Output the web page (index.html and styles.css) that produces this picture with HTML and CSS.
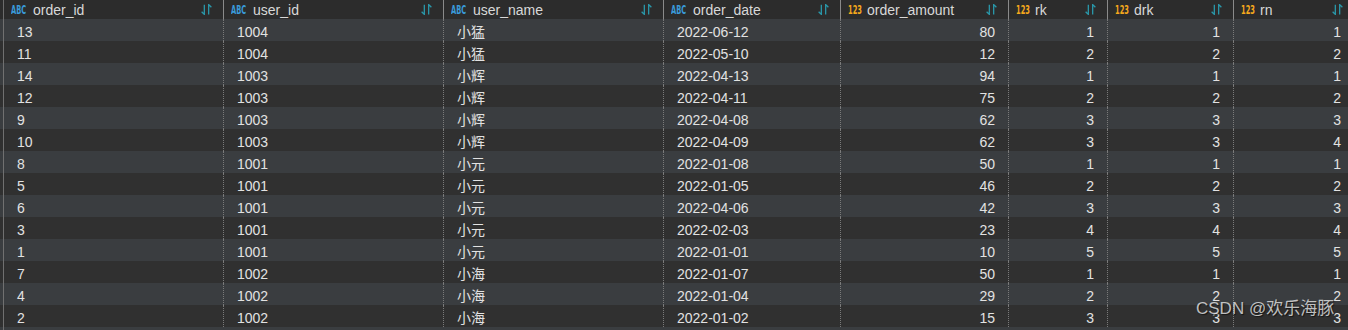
FILE: index.html
```html
<!DOCTYPE html>
<html>
<head>
<meta charset="utf-8">
<link rel="stylesheet" href="styles.css">
</head>
<body>
<div class="grid">
  <div class="row head">
    <div class="hc"><span class="badge abc">ABC</span><span class="ht">order_id</span><svg class="sort" viewBox="0 0 12 10"><path d="M4 0.5V9.5L1.5 7M8 9.5V0.5L10.5 3"/></svg></div>
    <div class="hc"><span class="badge abc">ABC</span><span class="ht">user_id</span><svg class="sort" viewBox="0 0 12 10"><path d="M4 0.5V9.5L1.5 7M8 9.5V0.5L10.5 3"/></svg></div>
    <div class="hc"><span class="badge abc">ABC</span><span class="ht">user_name</span><svg class="sort" viewBox="0 0 12 10"><path d="M4 0.5V9.5L1.5 7M8 9.5V0.5L10.5 3"/></svg></div>
    <div class="hc"><span class="badge abc">ABC</span><span class="ht">order_date</span><svg class="sort" viewBox="0 0 12 10"><path d="M4 0.5V9.5L1.5 7M8 9.5V0.5L10.5 3"/></svg></div>
    <div class="hc"><span class="badge num">123</span><span class="ht">order_amount</span><svg class="sort" viewBox="0 0 12 10"><path d="M4 0.5V9.5L1.5 7M8 9.5V0.5L10.5 3"/></svg></div>
    <div class="hc"><span class="badge num">123</span><span class="ht">rk</span><svg class="sort" viewBox="0 0 12 10"><path d="M4 0.5V9.5L1.5 7M8 9.5V0.5L10.5 3"/></svg></div>
    <div class="hc"><span class="badge num">123</span><span class="ht">drk</span><svg class="sort" viewBox="0 0 12 10"><path d="M4 0.5V9.5L1.5 7M8 9.5V0.5L10.5 3"/></svg></div>
    <div class="hc"><span class="badge num">123</span><span class="ht">rn</span><svg class="sort" viewBox="0 0 12 10"><path d="M4 0.5V9.5L1.5 7M8 9.5V0.5L10.5 3"/></svg></div>
  </div>
  <div class="row odd"><div class="c">13</div><div class="c">1004</div><div class="c">小猛</div><div class="c">2022-06-12</div><div class="c r">80</div><div class="c r">1</div><div class="c r">1</div><div class="c r">1</div></div>
  <div class="row even"><div class="c">11</div><div class="c">1004</div><div class="c">小猛</div><div class="c">2022-05-10</div><div class="c r">12</div><div class="c r">2</div><div class="c r">2</div><div class="c r">2</div></div>
  <div class="row odd"><div class="c">14</div><div class="c">1003</div><div class="c">小辉</div><div class="c">2022-04-13</div><div class="c r">94</div><div class="c r">1</div><div class="c r">1</div><div class="c r">1</div></div>
  <div class="row even"><div class="c">12</div><div class="c">1003</div><div class="c">小辉</div><div class="c">2022-04-11</div><div class="c r">75</div><div class="c r">2</div><div class="c r">2</div><div class="c r">2</div></div>
  <div class="row odd"><div class="c">9</div><div class="c">1003</div><div class="c">小辉</div><div class="c">2022-04-08</div><div class="c r">62</div><div class="c r">3</div><div class="c r">3</div><div class="c r">3</div></div>
  <div class="row even"><div class="c">10</div><div class="c">1003</div><div class="c">小辉</div><div class="c">2022-04-09</div><div class="c r">62</div><div class="c r">3</div><div class="c r">3</div><div class="c r">4</div></div>
  <div class="row odd"><div class="c">8</div><div class="c">1001</div><div class="c">小元</div><div class="c">2022-01-08</div><div class="c r">50</div><div class="c r">1</div><div class="c r">1</div><div class="c r">1</div></div>
  <div class="row even"><div class="c">5</div><div class="c">1001</div><div class="c">小元</div><div class="c">2022-01-05</div><div class="c r">46</div><div class="c r">2</div><div class="c r">2</div><div class="c r">2</div></div>
  <div class="row odd"><div class="c">6</div><div class="c">1001</div><div class="c">小元</div><div class="c">2022-04-06</div><div class="c r">42</div><div class="c r">3</div><div class="c r">3</div><div class="c r">3</div></div>
  <div class="row even"><div class="c">3</div><div class="c">1001</div><div class="c">小元</div><div class="c">2022-02-03</div><div class="c r">23</div><div class="c r">4</div><div class="c r">4</div><div class="c r">4</div></div>
  <div class="row odd"><div class="c">1</div><div class="c">1001</div><div class="c">小元</div><div class="c">2022-01-01</div><div class="c r">10</div><div class="c r">5</div><div class="c r">5</div><div class="c r">5</div></div>
  <div class="row even"><div class="c">7</div><div class="c">1002</div><div class="c">小海</div><div class="c">2022-01-07</div><div class="c r">50</div><div class="c r">1</div><div class="c r">1</div><div class="c r">1</div></div>
  <div class="row odd"><div class="c">4</div><div class="c">1002</div><div class="c">小海</div><div class="c">2022-01-04</div><div class="c r">29</div><div class="c r">2</div><div class="c r">2</div><div class="c r">2</div></div>
  <div class="row even"><div class="c">2</div><div class="c">1002</div><div class="c">小海</div><div class="c">2022-01-02</div><div class="c r">15</div><div class="c r">3</div><div class="c r">3</div><div class="c r">3</div></div>
  <div class="row odd tail"></div>
</div>
<div class="watermark">CSDN @欢乐海豚</div>
</body>
</html>
```
FILE: styles.css
```css
html, body {
  margin: 0;
  padding: 0;
  width: 1348px;
  height: 330px;
  overflow: hidden;
  background: #303030;
  font-family: "Liberation Sans", "Noto Sans CJK SC", sans-serif;
}
.grid {
  display: flex;
  flex-direction: column;
  width: 1360px;
}
.row {
  display: grid;
  grid-template-columns: 220px 220px 220px 177px 168px 99px 126px 121px;
  padding-left: 3px;
}
.head {
  height: 19px;
  background: #2c2c2c;
}
.odd { background: #3a3d40; height: 22px; }
.even { background: #303030; height: 22px; }
.tail { height: 8px; }
.hc {
  display: flex;
  align-items: center;
  border-left: 1px solid #8a8a8a;
  padding-left: 7px;
  padding-right: 10px;
  color: #d8d8d8;
  font-size: 14px;
}
.hc:first-child { border-left-color: #6c6c6c; }
.ht { flex: 1; margin-left: 7px; white-space: nowrap; }
.badge {
  display: inline-block;
  flex: none;
  font-family: "DejaVu Sans Condensed", "DejaVu Sans", sans-serif;
  font-weight: bold;
  font-size: 12px;
  line-height: 12px;
  white-space: nowrap;
  transform: scaleX(0.62);
  transform-origin: left center;
}
.abc { color: #3a9ad8; width: 15px; }
.num { color: #f5a81c; width: 13px; }
.num + .ht { margin-left: 6px; }
.sort {
  flex: none;
  width: 13px;
  height: 11px;
  fill: none;
  stroke: #2a98aa;
  stroke-width: 1.2;
}
.c {
  border-left: 1px dotted #7a7a7a;
  padding: 4px 13px 0 13px;
  color: #e2e2e2;
  font-size: 14px;
  line-height: 18px;
  white-space: nowrap;
}
.c:first-child { border-left: 1px solid #707070; }
.c.r { text-align: right; }
.watermark {
  position: absolute;
  left: 1196px;
  top: 299px;
  font-size: 17px;
  line-height: 20px;
  color: rgba(235, 235, 235, 0.78);
  text-shadow: 1px 1px 1px rgba(0, 0, 0, 0.6);
  white-space: nowrap;
}
.tail::before {
  content: "";
  border-left: 1px solid #707070;
}
```
